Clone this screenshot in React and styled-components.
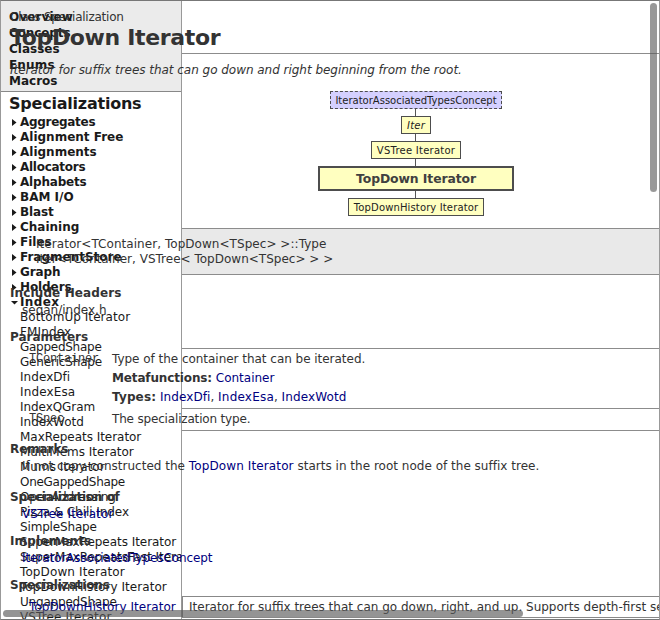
import React from "react";
import styled, { createGlobalStyle } from "styled-components";

const GlobalStyle = createGlobalStyle`
  * { box-sizing: border-box; }
  body { margin: 0; overflow: hidden; background: #fff; }
`;

const Page = styled.div`
  width: 660px;
  height: 620px;
  display: grid;
  grid-template-columns: 660px;
  grid-template-rows: 620px;
  overflow: hidden;
  font-family: Verdana, "DejaVu Sans", sans-serif;
  font-size: 12px;
  line-height: 15px;
  white-space: pre;
  color: #333;
  border: 1px solid #999;
  border-top-color: #777;
  border-bottom-color: #777;
  & > * { grid-area: 1 / 1; }
`;

const Sidebar = styled.nav`
  width: 181px;
  height: 618px;
  border-right: 1px solid #999;
  overflow: hidden;
  color: #1a1a1a;
`;

const SidebarTabs = styled.div`
  height: 91px;
  padding: 8px 0 0 8px;
  background: #ebebeb;
  border-bottom: 1px solid #888;
  font-weight: bold;
  line-height: 16px;
`;

const SidebarTitle = styled.h2`
  margin: 0;
  padding: 1px 0 0 8px;
  height: 23px;
  font-size: 16px;
  line-height: 22px;
  letter-spacing: -0.22px;
`;

const Line = styled.div`
  letter-spacing: ${(p) => p.$ls || 0}px;
`;

const TreeRow = styled.div`
  height: 15px;
  display: grid;
  grid-template-columns: 8px auto;
  padding-left: 11px;
  align-items: center;
  font-weight: ${(p) => (p.$bold ? "bold" : "normal")};
  letter-spacing: ${(p) => p.$ls || 0}px;
  & > span { grid-column: 2; }
`;

const ArrowIcon = styled.svg`
  width: 8px;
  height: 9px;
  margin-top: -1px;
  fill: #1a1a1a;
  overflow: visible;
`;

const Main = styled.main`
  min-width: 0;
  height: 618px;
  overflow: hidden;
`;

const Section = styled.section`
  height: ${(p) => p.$h}px;
  margin-left: 181px;
  padding-top: ${(p) => p.$pt || 0}px;
  background: ${(p) => p.$bg || "transparent"};
  border-bottom: 1px solid #8c8c8c;
`;

const Text = styled.div`
  margin-left: ${(p) => p.$x - 182}px;
  margin-top: ${(p) => p.$mt || 0}px;
  height: 15px;
  letter-spacing: ${(p) => p.$ls || 0}px;
  font-style: ${(p) => (p.$italic ? "italic" : "normal")};
`;

const Title = styled.h1`
  margin: 0 0 0 -172px;
  font-size: 22px;
  line-height: 26px;
  letter-spacing: -0.34px;
`;

const Heading = styled.h3`
  margin: ${(p) => p.$mt || 0}px 0 0 -172px;
  font-size: 12px;
  line-height: 15px;
  letter-spacing: ${(p) => p.$ls || 0}px;
`;

const Link = styled.a`
  color: #000080;
  letter-spacing: ${(p) => p.$ls || 0}px;
`;

const Label = styled.b`
  letter-spacing: ${(p) => p.$ls || 0}px;
`;

const ParamRow = styled.div`
  margin-left: -153px;
  display: grid;
  grid-template-columns: 83px auto;
`;

const Mono = styled.code`
  font: 12px/15px "Courier New", "Liberation Mono", monospace;
  letter-spacing: -0.2px;
`;

const ParamText = styled.div`
  display: grid;
  row-gap: 4px;
`;

const Diagram = styled.div`
  width: 196px;
  margin: 13px 0 0 136px;
  display: flex;
  flex-direction: column;
  align-items: center;
`;

const Node = styled.div`
  width: ${(p) => p.$w}px;
  height: ${(p) => (p.$main ? 25 : 18)}px;
  line-height: ${(p) => (p.$main ? 22 : 18)}px;
  border: ${(p) => (p.$main ? 2 : 1)}px ${(p) => (p.$concept ? "dashed" : "solid")} #4d4d4d;
  background: ${(p) => (p.$concept ? "#d4d0ff" : "#ffffc0")};
  color: ${(p) => (p.$main ? "#404040" : "#222")};
  font-size: ${(p) => (p.$main ? 12.4 : 10)}px;
  font-weight: ${(p) => (p.$main ? "bold" : "normal")};
  font-style: ${(p) => (p.$italic ? "italic" : "normal")};
  letter-spacing: ${(p) => p.$ls || 0}px;
  text-align: center;
`;

const Connector = styled.div`
  width: 1px;
  height: 7px;
  margin-right: 1px;
  background: #555;
`;

const SubclassRow = styled.div`
  margin: 3px 0 0 -153px;
  height: 22px;
  display: grid;
  grid-template-columns: 153px auto;
  line-height: 20px;
`;

const SubclassName = styled.div`
  padding-top: 1px;
`;

const SubclassCell = styled.div`
  border: 1px solid #888;
  border-right: 0;
  padding-left: 6px;
`;

const HScroll = styled.div`
  align-self: start;
  margin: 609px 0 0 2px;
  width: 520px;
  height: 7px;
  border-radius: 4px;
  background: rgba(90, 90, 90, 0.65);
  z-index: 1;
`;

const VScroll = styled.div`
  margin: 2px 0 0 649px;
  width: 7px;
  height: 189px;
  border-radius: 4px;
  background: rgba(90, 90, 90, 0.62);
  z-index: 1;
`;

const tabs = [["Overview", 0.1], ["Concepts", -0.1], ["Classes", 0], ["Enums", 0.15], ["Macros", 0]];

const groups = [
  ["Aggregates", -0.3], ["Alignment Free", 0], ["Alignments", 0], ["Allocators", -0.27],
  ["Alphabets", -0.2], ["BAM I/O", 0], ["Blast", -0.1], ["Chaining", 0], ["Files", 0],
  ["FragmentStore", 0], ["Graph", -0.1], ["Holders", -0.1], ["Index", 0.4],
];

const entries = [
  ["BottomUp Iterator", 0.06], ["FMIndex", 0.14], ["GappedShape", -0.27], ["GenericShape", -0.18],
  ["IndexDfi", 0.05], ["IndexEsa", 0.14], ["IndexQGram", -0.06], ["IndexWotd", 0],
  ["MaxRepeats Iterator", -0.04], ["MultiMems Iterator", 0], ["Mums Iterator", 0],
  ["OneGappedShape", -0.28], ["OpenAddressing", -0.2], ["Pizza & Chili Index", -0.06],
  ["SimpleShape", -0.16], ["SuperMaxRepeats Iterator", -0.04], ["SuperMaxRepeatsFast Iterator", -0.04],
  ["TopDown Iterator", 0.12], ["TopDownHistory Iterator", 0.05], ["UngappedShape", -0.2],
  ["VSTree Iterator", 0.13],
];

const Arrow = ({ open }) => (
  <ArrowIcon viewBox="0 0 8 9">
    <path d={open ? "M-1 3H6L2.5 6.5Z" : "M0 1L4.5 4.5L0 8Z"} />
  </ArrowIcon>
);

export default function App() {
  return (
    <Page>
      <GlobalStyle />
      <Sidebar>
        <SidebarTabs>
          {tabs.map(([t, ls]) => <Line key={t} $ls={ls}>{t}</Line>)}
        </SidebarTabs>
        <SidebarTitle>Specializations</SidebarTitle>
        {groups.map(([g, ls]) => (
          <TreeRow key={g} $bold $ls={ls}><Arrow open={g === "Index"} /><span>{g}</span></TreeRow>
        ))}
        {entries.map(([e, ls]) => <TreeRow key={e} $ls={ls}><span>{e}</span></TreeRow>)}
      </Sidebar>
      <Main>
        <Section $h={53} $pt={9}>
          <Text $x={10} $ls={-0.25}>Class Specialization</Text>
          <Title>TopDown Iterator</Title>
        </Section>
        <Section $h={175} $pt={9}>
          <Text $x={10} $italic $ls={-0.03}>Iterator for suffix trees that can go down and right beginning from the root.</Text>
          <Diagram>
            <Node $w={172} $concept>IteratorAssociatedTypesConcept</Node>
            <Connector />
            <Node $w={30} $italic $ls={0.2}>Iter</Node>
            <Connector />
            <Node $w={90} $ls={0.25}>VSTree Iterator</Node>
            <Connector />
            <Node $w={196} $main $ls={-0.1}>TopDown Iterator</Node>
            <Connector />
            <Node $w={136} $ls={0.13}>TopDownHistory Iterator</Node>
          </Diagram>
        </Section>
        <Section $h={46} $pt={8} $bg="#e9e9e9">
          <Text $x={36} $ls={0.05}>{"Iterator<TContainer, TopDown<TSpec> >::Type"}</Text>
          <Text $x={36} $ls={0.01}>{"Iter<TContainer, VSTree< TopDown<TSpec> > >"}</Text>
        </Section>
        <Section $h={74} $pt={11}>
          <Heading $ls={0.12}>Include Headers</Heading>
          <Text $x={22} $mt={2}>seqan/index.h</Text>
          <Heading $mt={12}>Parameters</Heading>
        </Section>
        <Section $h={60} $pt={3}>
          <ParamRow>
            <Mono>TContainer</Mono>
            <ParamText>
              <Line $ls={-0.03}>Type of the container that can be iterated.</Line>
              <Line><Label $ls={-0.14}>Metafunctions:</Label> <Link>Container</Link></Line>
              <Line><Label $ls={0.15}>Types:</Label> <Link $ls={0.08}>IndexDfi</Link>, <Link $ls={0.2}>IndexEsa</Link>, <Link $ls={0.12}>IndexWotd</Link></Line>
            </ParamText>
          </ParamRow>
        </Section>
        <Section $h={22} $pt={3}>
          <ParamRow>
            <Mono>TSpec</Mono>
            <Line $ls={-0.17}>The specialization type.</Line>
          </ParamRow>
        </Section>
        <Section $h={187} $pt={11}>
          <Heading $ls={-0.1}>Remarks</Heading>
          <Text $x={22} $mt={2} $ls={0.01}>If not copy-constructed the <Link $ls={0.12}>TopDown Iterator</Link> starts in the root node of the suffix tree.</Text>
          <Heading $mt={16} $ls={-0.16}>Specialization of</Heading>
          <Text $x={22} $mt={2}><Link $ls={0.13}>VSTree Iterator</Link></Text>
          <Heading $mt={12} $ls={0.15}>Implements</Heading>
          <Text $x={22} $mt={2}><Link $ls={-0.1}>IteratorAssociatedTypesConcept</Link></Text>
          <Heading $mt={12} $ls={-0.14}>Specializations</Heading>
          <SubclassRow>
            <SubclassName><Link $ls={0.05}>TopDownHistory Iterator</Link></SubclassName>
            <SubclassCell>Iterator for suffix trees that can go down, right, and up. Supports depth-first search.</SubclassCell>
          </SubclassRow>
        </Section>
      </Main>
      <HScroll />
      <VScroll />
    </Page>
  );
}
